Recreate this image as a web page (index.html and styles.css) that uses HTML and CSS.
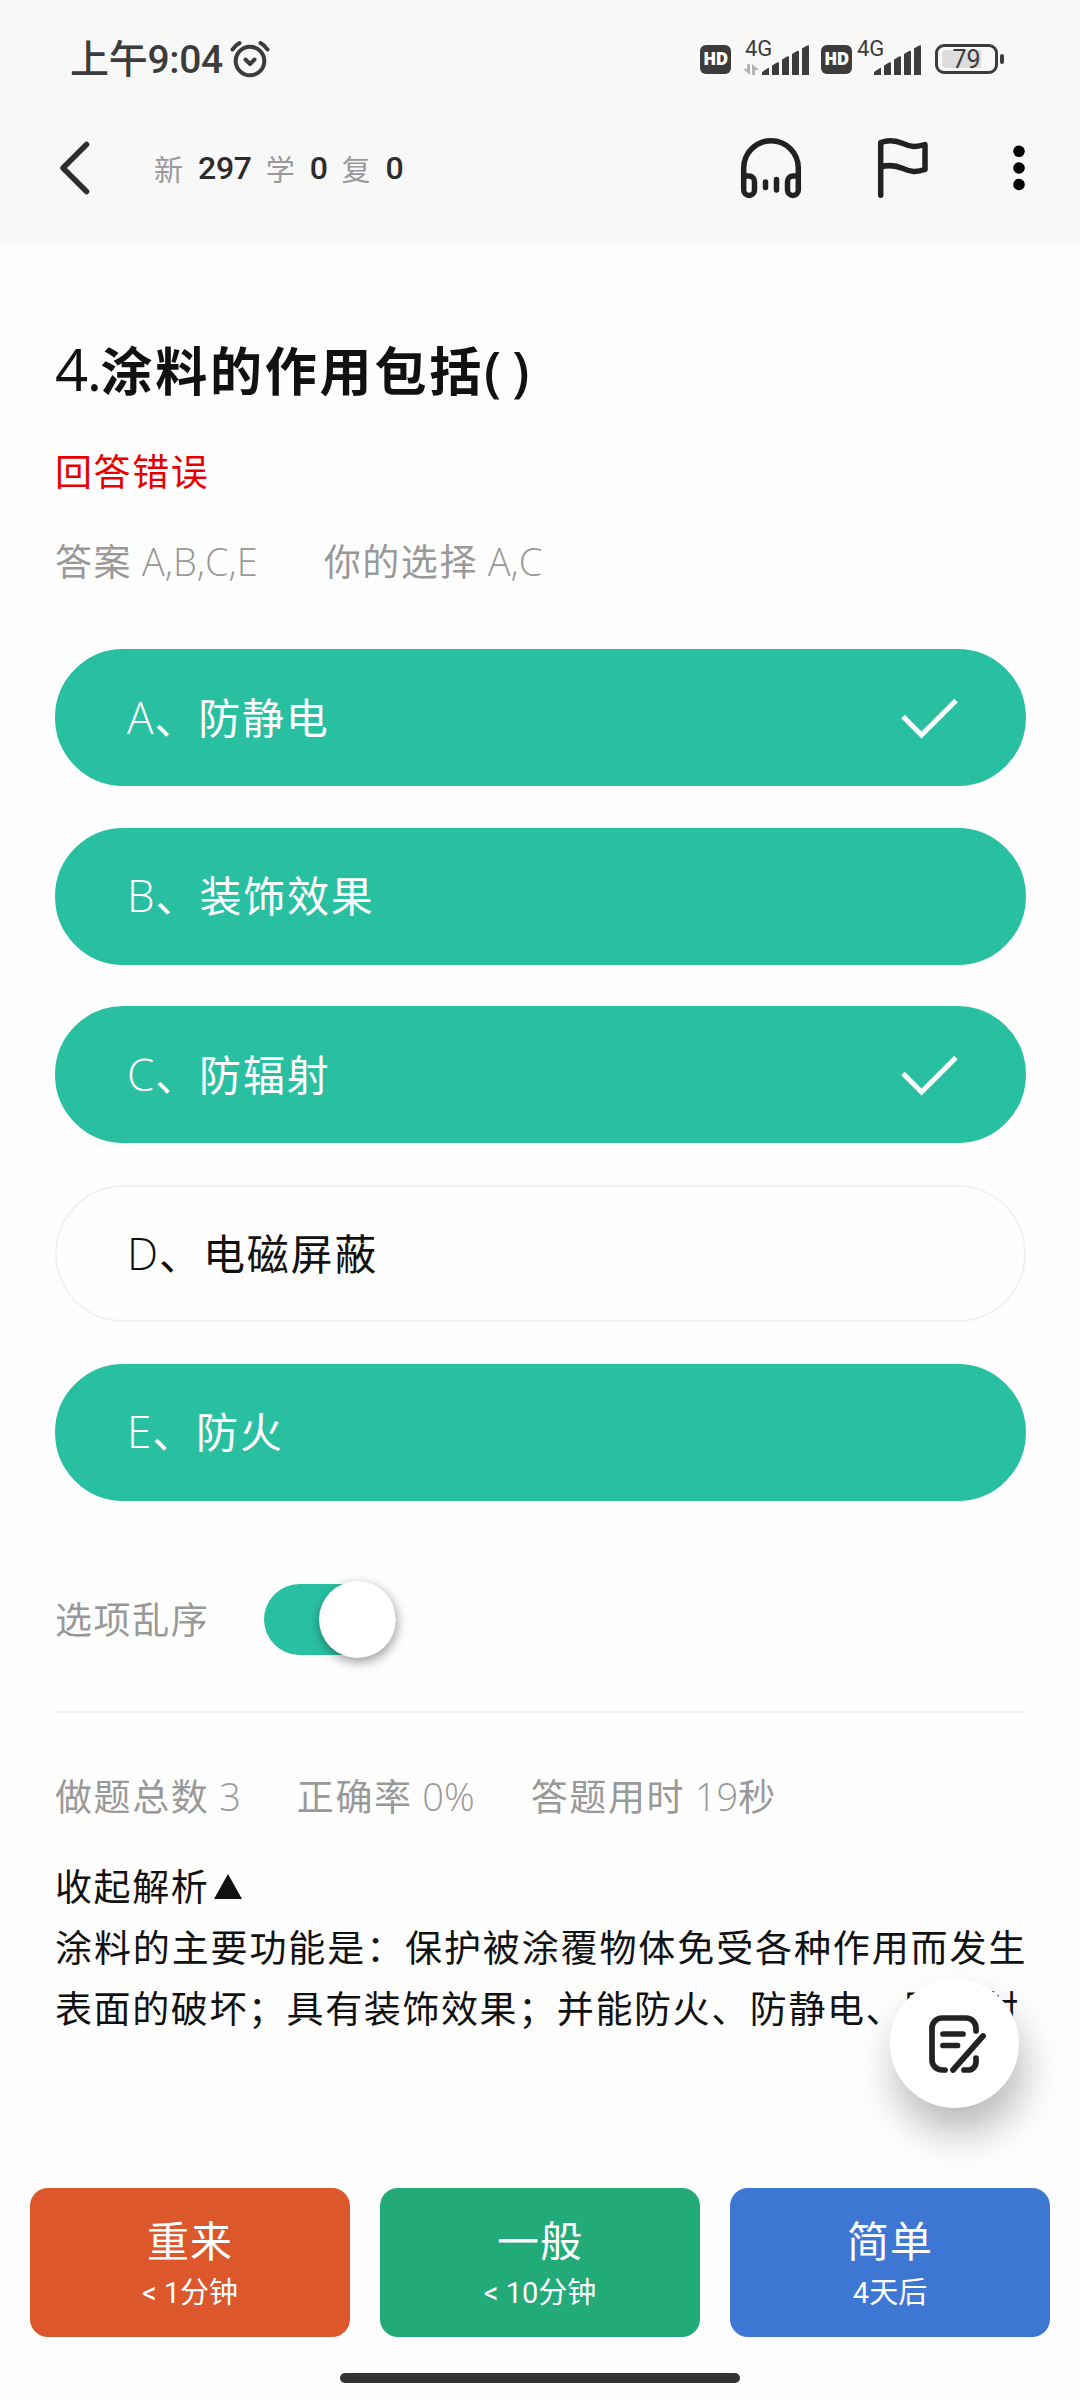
FILE: index.html
```html
<!doctype html>
<html lang="zh-CN">
<head>
    <meta charset="utf-8">
    <meta name="viewport" content="width=device-width, initial-scale=1.0">
    <title>涂料的作用包括</title>
    <link rel="stylesheet" href="styles.css">
</head>

<body>

<header class="header">
    <div class="status">
        <span class="time">上午9:04</span>
        <svg class="alarm" width="40" height="38" viewBox="0 0 40 38" fill="none" stroke="#3c3c3c" stroke-width="4" stroke-linecap="round" stroke-linejoin="round">
            <circle cx="20" cy="21" r="14.3"/>
            <path d="M2.500 9.500Q5 5.500 9.500 3M37.500 9.500Q35 5.500 30.500 3M15.500 19.500L20 24L24.500 19.500"/>
        </svg>
        <div class="status-right">
            <span class="hd">HD</span>
            <svg class="signal" width="66" height="38" viewBox="0 0 66 38">
                <text x="2" y="16">4G</text>
                <path fill="#b4b4b4" d="M4 24h3v11L0 29h4zM9 24l7 6h-4v5H9z"/>
                <path fill="#3c3c3c" d="M19 35v-3l6-4h1v7zM29 35V25.500l5-3h2v12.500zM39 35V19.500l5-3h2v18.500zM49 35V14l5-3h2v24zM59 35V8.500l5-3h2v29.500z"/>
            </svg>
            <span class="hd hd-second">HD</span>
            <svg class="signal signal-second" width="66" height="38" viewBox="0 0 66 38">
                <text x="2" y="16">4G</text>
                <path fill="#3c3c3c" d="M19 35v-3l6-4h1v7zM29 35V25.500l5-3h2v12.500zM39 35V19.500l5-3h2v18.500zM49 35V14l5-3h2v24zM59 35V8.500l5-3h2v29.500z"/>
            </svg>
            <span class="battery"><span class="level">79</span></span>
            <span class="battery-tip"></span>
        </div>
    </div>
    <nav class="nav">
        <svg class="back" width="30" height="54" viewBox="0 0 30 54" fill="none" stroke="#2c2c2c" stroke-width="5.500" stroke-linecap="round" stroke-linejoin="round">
            <path d="M26.500 3.500L3 27L26.500 50.500"/>
        </svg>
        <div class="counts">
            <span>新</span><b>297</b><span>学</span><b>0</b><span>复</span><b>0</b>
        </div>
        <svg class="headphones" width="60" height="60" viewBox="0 0 60 60" fill="none" stroke="#222" stroke-width="5.500" stroke-linecap="round">
            <path d="M2.700 52V30a27.300 27.300 0 0 1 54.600 0V52M2.700 38H8a5.500 5.500 0 0 1 5.500 5.500V52a5.400 5.400 0 0 1-10.800 0M57.300 38H52a5.500 5.500 0 0 0-5.500 5.500V52a5.400 5.400 0 0 0 10.800 0M24.500 44v5.500M35.500 41.500V52"/>
        </svg>
        <svg class="flag" width="50" height="60" viewBox="0 0 50 60" fill="none" stroke="#222" stroke-width="5.500" stroke-linecap="round" stroke-linejoin="round">
            <path d="M2.700 57.300V4.500C11 1.500 17 2 25 5.500S38 9.500 47 6.500V31.500C38 34.500 33 34 25 30.500S11 26.500 2.700 29"/>
        </svg>
        <svg class="more" width="12" height="46" viewBox="0 0 12 46">
            <circle cx="6" cy="6.300" r="5.800"/><circle cx="6" cy="23" r="5.800"/><circle cx="6" cy="39.500" r="5.800"/>
        </svg>
    </nav>
</header>

<main class="question">
    <h1><span class="num">4.</span>涂料的作用包括<span class="paren">( )</span></h1>
    <p class="wrong">回答错误</p>
    <p class="answers"><span>答案 <i>A,B,C,E</i></span><span>你的选择 <i>A,C</i></span></p>

    <ul class="options">
        <li class="right"><span><i>A</i>、防静电</span>
            <svg width="58" height="42" viewBox="0 0 58 42" fill="none" stroke="#fff" stroke-width="5"><path d="M3 19.500L21.500 38L56 3.500"/></svg>
        </li>
        <li class="right"><span><i>B</i>、装饰效果</span></li>
        <li class="right"><span><i>C</i>、防辐射</span>
            <svg width="58" height="42" viewBox="0 0 58 42" fill="none" stroke="#fff" stroke-width="5"><path d="M3 19.500L21.500 38L56 3.500"/></svg>
        </li>
        <li><span><i>D</i>、电磁屏蔽</span></li>
        <li class="right"><span><i>E</i>、防火</span></li>
    </ul>

    <div class="shuffle">
        <span>选项乱序</span>
        <div class="switch"><div class="thumb"></div></div>
    </div>

    <p class="stats"><span>做题总数 <i>3</i></span><span>正确率 <i>0%</i></span><span>答题用时 <i>19</i>秒</span></p>

    <div class="analysis">
        <div class="fold">收起解析<svg width="28" height="25" viewBox="0 0 28 25"><path fill="#111" d="M14 0L28 25H0z"/></svg></div>
        <p>涂料的主要功能是：保护被涂覆物体免受各种作用而发生表面的破坏；具有装饰效果；并能防火、防静电、防辐射</p>
    </div>
</main>

<div class="note">
    <svg width="56" height="58" viewBox="0 0 56 58" fill="none" stroke="#222" stroke-width="5.700" stroke-linecap="round">
        <path d="M16 55H13A10 10 0 0 1 3 45V13A10 10 0 0 1 13 3H37A10 10 0 0 1 47 13V16M47 43V47A8 8 0 0 1 39 55H35M14 19H34M14 30.500H28.500M54 21L24 55"/>
    </svg>
</div>

<footer class="footer">
    <div class="buttons">
        <button class="again">重来<small>&lt; 1分钟</small></button>
        <button class="normal">一般<small>&lt; 10分钟</small></button>
        <button class="easy">简单<small>4天后</small></button>
    </div>
    <div class="home-bar"></div>
</footer>

</body>

</html>
```
FILE: styles.css
```css
* {
    box-sizing: border-box;
}

body {
    margin: 0;
    width: 1080px;
    height: 2400px;
    display: flex;
    flex-direction: column;
    position: relative;
    overflow: hidden;
    background: #fefefe;
    color: #111;
    font-family: "Open Sans", "Noto Sans CJK SC", sans-serif;
}

h1, p, ul {
    margin: 0;
    padding: 0;
}

i {
    font-style: normal;
    font-weight: 300;
    letter-spacing: 0;
}

svg {
    display: block;
    flex: none;
    overflow: visible;
}

/* status bar + nav */
.header {
    height: 245px;
    flex: none;
    background: #f8f8f8;
    font-family: Roboto, "Noto Sans CJK SC", sans-serif;
}

.status {
    display: flex;
    align-items: center;
    height: 118px;
    padding: 0 76px 0 70px;
    color: #3c3c3c;
}

.time {
    width: 153px;
    margin-right: 7px;
    padding-bottom: 6px;
    font-size: 39px;
    font-weight: 500;
    letter-spacing: -.3px;
    white-space: nowrap;
}

.status-right {
    display: flex;
    align-items: center;
    margin-left: auto;
}

.hd {
    width: 31px;
    height: 29px;
    border-radius: 6px;
    background: #3c3c3c;
    color: #fff;
    font: 800 17px/28px "Open Sans", sans-serif;
    letter-spacing: -.5px;
    text-align: center;
}

.signal {
    margin: 0 0 0 12px;
}

.signal text {
    font: 22px Roboto, sans-serif;
    fill: #3c3c3c;
}

.hd-second {
    margin-left: 12px;
}

.signal-second {
    margin-left: 3px;
}

.battery {
    width: 63px;
    height: 30px;
    margin-left: 14px;
    padding: 3px 4px;
    border: 3px solid #3c3c3c;
    border-radius: 9px;
}

.level {
    display: block;
    height: 18px;
    border-radius: 4px;
    background: linear-gradient(90deg, #ddd 39px, transparent 39px);
    font-size: 25px;
    line-height: 19px;
    text-align: center;
}

.battery-tip {
    width: 4px;
    height: 10px;
    margin-left: 2px;
    border-radius: 2px;
    background: #3c3c3c;
}

.nav {
    display: flex;
    align-items: center;
    height: 100px;
    padding: 0 55px 0 60px;
}

.counts {
    display: flex;
    align-items: center;
    width: 300px;
    margin-left: 64px;
    color: #999;
    font-size: 29px;
    white-space: nowrap;
}

.counts b {
    margin: 0 14px 0 15px;
    color: #2c2c2c;
    font-size: 32px;
    font-weight: 500;
    letter-spacing: -.3px;
}

.headphones {
    margin-left: auto;
}

.flag {
    margin-left: 77px;
}

.more {
    margin-left: 85px;
}

/* question */
.question {
    padding: 80px 54px 0 55px;
    font-size: 37px;
    letter-spacing: 1.600px;
}

h1 {
    height: 88px;
    font-size: 52px;
    line-height: 88px;
    letter-spacing: 2.800px;
}

.num {
    font-size: 58px;
    font-weight: 400;
    letter-spacing: -1.500px;
}

.paren {
    font-size: 54px;
    font-weight: 600;
    letter-spacing: 0;
    word-spacing: -3px;
}

.wrong {
    margin-top: 29px;
    line-height: 60px;
    color: #e60000;
}

.answers,
.stats {
    display: flex;
    color: #999;
    line-height: 60px;
    word-spacing: -1.500px;
}

.answers {
    gap: 66px;
    margin-top: 29px;
}

.answers i,
.stats i {
    font-size: 38px;
}

.options {
    display: grid;
    gap: 41.700px;
    margin-top: 57px;
    list-style: none;
    font-size: 42px;
    letter-spacing: 1.800px;
}

.options li {
    display: flex;
    align-items: center;
    justify-content: space-between;
    height: 137px;
    padding: 0 66px 0 70px;
    border: 2px solid #f2f2f2;
    border-radius: 70px;
}

.options span {
    padding-bottom: 4px;
}

.options i {
    font-size: 44px;
    letter-spacing: 1px;
}

.options .right {
    border-color: #29c0a2;
    background: #29c0a2;
    color: #fff;
}

.shuffle {
    display: flex;
    align-items: center;
    height: 212px;
    padding-top: 27px;
    border-bottom: 2px solid #f0f0f0;
    color: #999;
}

.shuffle span {
    padding-bottom: 3px;
}

.switch {
    display: flex;
    align-items: center;
    justify-content: flex-end;
    width: 132px;
    height: 71px;
    margin-left: 55px;
    border-radius: 36px;
    background: #29c0a2;
}

.thumb {
    flex: none;
    width: 77px;
    height: 77px;
    border-radius: 50%;
    background: #fff;
    box-shadow: 1px 4px 12px rgba(0, 0, 0, .4);
}

.stats {
    gap: 56px;
    margin-top: 53px;
}

.analysis {
    margin-top: 29px;
    line-height: 61px;
}

.analysis p {
    width: 972px;
    line-break: anywhere;
    text-align: justify;
}

.fold {
    display: flex;
    align-items: center;
    gap: 5px;
}

/* floating note button */
.note {
    position: absolute;
    left: 890px;
    top: 1979px;
    display: flex;
    align-items: center;
    justify-content: center;
    width: 129px;
    height: 129px;
    padding-left: 5px;
    border-radius: 50%;
    background: #fff;
    box-shadow: 5px 25px 40px rgba(0, 0, 0, .27);
}

/* rating buttons */
.footer {
    margin-top: auto;
    padding: 0 30px 17px;
}

.buttons {
    display: grid;
    grid-template-columns: repeat(3, 1fr);
    gap: 30px;
}

.buttons button {
    height: 149px;
    padding: 4px 0 0;
    border: 0;
    border-radius: 18px;
    color: #fff;
    font: 42px/56px Roboto, "Noto Sans CJK SC", sans-serif;
    letter-spacing: 1px;
}

.buttons small {
    display: block;
    font-size: 29px;
    line-height: 44px;
    letter-spacing: 0;
}

.again {
    background: #dc572c;
}

.normal {
    background: #22aa78;
}

.easy {
    background: #3e76d4;
}

.home-bar {
    width: 400px;
    height: 10px;
    margin: 36px auto 0;
    border-radius: 5px;
    background: #323232;
}
```
